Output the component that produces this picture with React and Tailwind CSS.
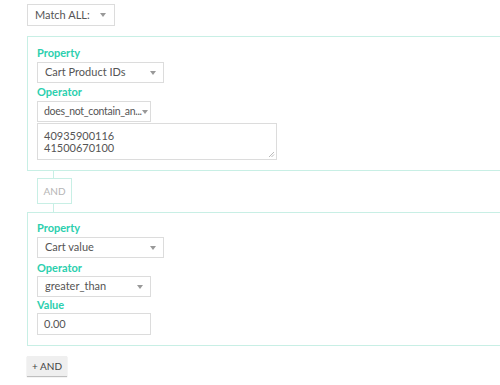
import React from "react";

const Caret = () => (
  <span className="inline-block shrink-0 w-0 h-0 border-l-[3.5px] border-r-[3.5px] border-t-[4px] border-l-transparent border-r-transparent border-t-[#999]" />
);

function Select({ text, w, h = "h-[21px]", caretPad = "pr-[7px]", pl = "pl-[7px]", textCls = "" }) {
  return (
    <div className={`flex items-center justify-between ${h} border border-[#dcdcdc] bg-white ${pl} ${caretPad} text-[11px] text-[#555] ${w}`}>
      <span className={`whitespace-nowrap ${textCls}`}>{text}</span>
      <Caret />
    </div>
  );
}

function Label({ children }) {
  return <div className="h-[14px] leading-[14px] text-[11px] font-bold text-[#2ccfae]">{children}</div>;
}

export default function App() {
  return (
    <div className="w-[500px] h-[385px] overflow-hidden bg-white pt-[4px] pl-[27px] font-['Lato',sans-serif]">
      <Select text="Match ALL:" w="w-[88px]" h="h-[22px]" caretPad="pr-[8px]" />
      <div className="mt-[10px] w-[500px] border border-[#c8efe5] pl-[9px] pt-[9px] pb-[10px]">
        <Label>Property</Label>
        <div className="mt-[2px]">
          <Select text="Cart Product IDs" w="w-[127px]" />
        </div>
        <div className="mt-[2px]">
          <Label>Operator</Label>
        </div>
        <div className="mt-[2px]">
          <Select text="does_not_contain_an..." w="w-[114px]" pl="pl-[6px]" caretPad="pr-[3px]" textCls="text-[10.5px] tracking-[-0.3px]" />
        </div>
        <div className="relative mt-[1px] w-[240px] h-[37px] border border-[#dcdcdc] pl-[6px] pt-[6px] text-[11px] leading-[12px] text-[#555]">
          <div>40935900116</div>
          <div>41500670100</div>
          <svg className="absolute right-[1px] bottom-[1px]" width="7" height="7" viewBox="0 0 7 7">
            <path d="M6 1 L1 6 M6 3.5 L3.5 6" stroke="#aaa" strokeWidth="0.8" />
          </svg>
        </div>
      </div>
      <div className="pl-[10px]">
        <div className="ml-[16px] w-px h-[7px] bg-[#c8efe5]" />
        <div className="w-[35px] h-[26px] border border-[#c8efe5] flex items-center justify-center text-[10px] text-[#b5b5b5]">AND</div>
        <div className="ml-[16px] w-px h-[8px] bg-[#c8efe5]" />
      </div>
      <div className="w-[500px] border border-[#c8efe5] pl-[9px] pt-[8px] pb-[10px]">
        <Label>Property</Label>
        <div className="mt-[2px]">
          <Select text="Cart value" w="w-[127px]" />
        </div>
        <div className="mt-[3px]">
          <Label>Operator</Label>
        </div>
        <div className="mt-[1px]">
          <Select text="greater_than" w="w-[114px]" caretPad="pr-[7px]" />
        </div>
        <div className="mt-[1px]">
          <Label>Value</Label>
        </div>
        <div className="mt-[1px] h-[22px] w-[114px] border border-[#dcdcdc] flex items-center pl-[6px] text-[11px] text-[#555]">0.00</div>
      </div>
      <div className="mt-[10px] w-[40px] h-[20px] bg-[#efefef] shadow-[0_1px_1px_rgba(0,0,0,0.25)] flex items-center justify-center text-[10px] text-[#444]">+ AND</div>
    </div>
  );
}
